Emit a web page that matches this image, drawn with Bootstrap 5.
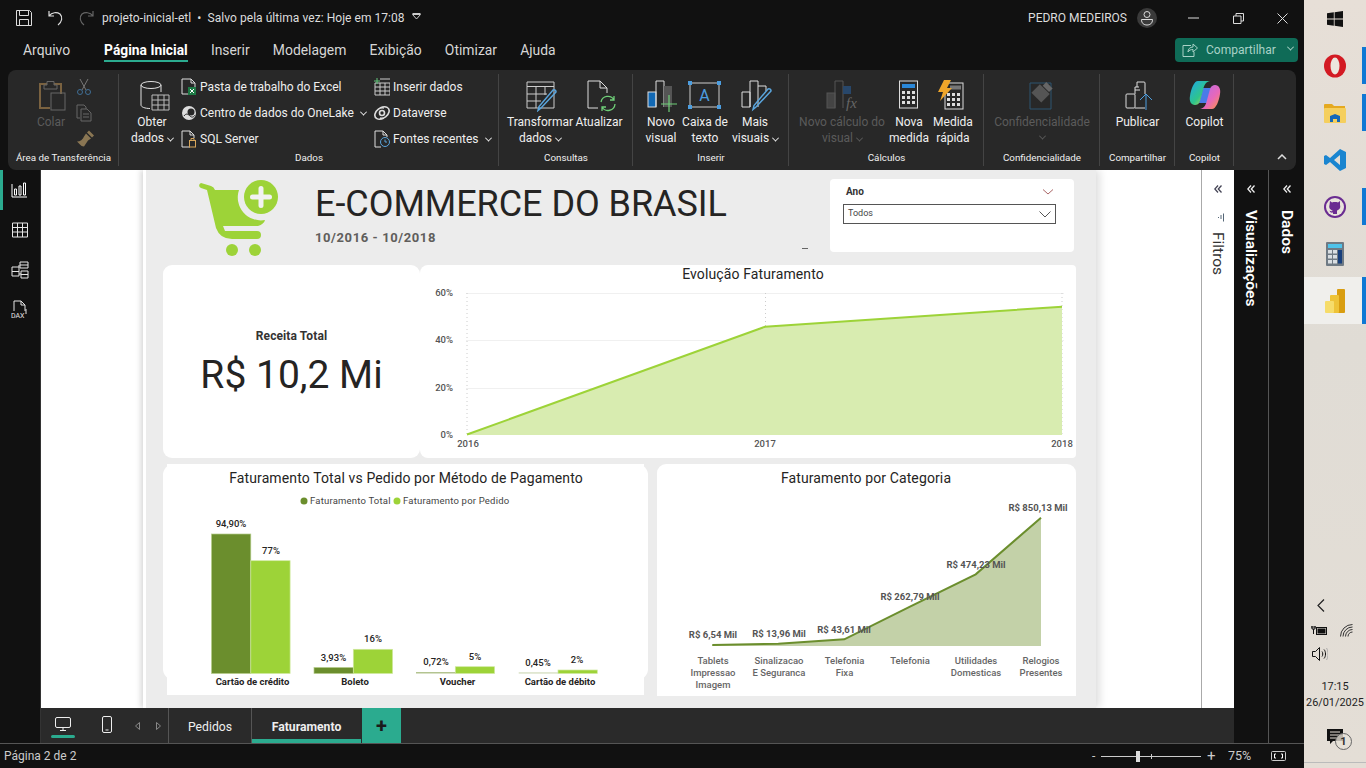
<!DOCTYPE html>
<html lang="pt-BR"><head><meta charset="utf-8"><title>Power BI</title>
<link href="https://cdn.jsdelivr.net/npm/bootstrap@5.3.0/dist/css/bootstrap.min.css" rel="stylesheet">
<style>
html,body{margin:0;width:1366px;height:768px;overflow:hidden;background:#111}
body{font-family:Roboto,"Liberation Sans",sans-serif;font-size:12px;color:#fff}
svg{display:block;flex:none}
.app{width:1304px;height:768px;background:#111}
.titlebar{height:36px;color:#ddd;padding-left:16px}
.tb-undo{margin-left:16px}.tb-redo{margin-left:14px}
.fname{margin-left:8px;letter-spacing:.05px}
.tb-caret{margin-left:7px;margin-bottom:4px}
.tb-av{margin-left:10px;margin-right:15px}
.winbtn{width:44px;display:flex;justify-content:center}
.menubar{height:34px;padding:0 0 6px 23px;font-size:13.9px;color:#d6d6d6;gap:23.2px;position:relative}
.m-arq{margin-right:10.8px}
.menu-on{color:#fff;font-weight:700;position:relative;font-size:13.8px}
.menu-on::after{content:"";position:absolute;left:0;right:0;bottom:-2px;height:2px;background:#2bab8f}
.share{position:absolute;left:1175px;top:2px;width:123px;height:24px;background:#0f6b57;border:0;border-radius:4px;color:#a9d2c7;font-size:12px;padding:0 0 0 7px;gap:8px}
.share:hover{background:#0f6b57;color:#a9d2c7}
.sh-chev{margin:0 0 3px -2px}
.ribbon{height:100px;margin:0 8px;background:#282828;border-radius:8px;position:relative}
.rg{height:100px;position:relative;display:flex;flex-direction:column;flex:none}
.rg::after{content:"";position:absolute;right:0;top:4px;bottom:4px;width:1px;background:#444}
.rg-body{display:flex;flex:1;min-height:0}
.rg-lab{font-size:9.8px;line-height:14px;text-align:center;color:#f0f0f0;padding-bottom:5px}
.bigb{display:flex;flex-direction:column;align-items:center;padding-top:10px;text-align:center;line-height:16px;color:#efefef;flex:none;white-space:nowrap}
.bigb .ico{height:34px;display:flex;align-items:flex-start;justify-content:center}
.ic-r2{margin-left:4px}.ic-r3{margin-left:6px}.ic-l3{margin-right:5px}
.dis{color:#5b5b5b}
.smallcol{display:flex;flex-direction:column;padding-top:4px;flex:none}
.srow{height:26px;display:flex;align-items:center;gap:3px;color:#efefef;white-space:nowrap;flex:none}
.srow svg{width:16px;height:18px}
.chev{display:inline-block;width:5px;height:5px;border:solid currentColor;border-width:0 1px 1px 0;transform:rotate(45deg) translate(-1px,-1px);margin-left:4px}
.w-g1{width:111px}.w-g2{width:380px}.w-g3{width:134px}.w-g4{width:156px}.w-g5{width:195px}.w-g6{width:116px}.w-g7{width:75px}.w-g8{width:59px}
.b-colar{margin-left:21px;width:44px}
.clipcol{display:flex;flex-direction:column;gap:8px;margin-left:3px;padding-top:8px;flex:none}
.clipcol svg{height:18px}
.b-obter{margin-left:13px;width:40px}
.sc-a{margin-left:9px;width:193px}
.b-transf{margin-left:8px;width:66px}.b-atual{margin-left:2px;width:48px}
.b-novo{margin-left:8px;width:40px}.b-caixa{margin-left:2px;width:44px}.b-mais{margin-left:6px;width:44px}
.b-calc{margin-left:7px;width:92px}.b-nova{margin-left:1px;width:40px}.b-rap{margin-left:2px;width:44px}
.conf-chev{margin:5px 0 0 0}
.collapse-ic{position:absolute;right:9px;bottom:10px}
.mainrow{height:573px}
.rail{width:41px;border-right:1px solid #333;background:#111}
.railbtn{height:40px;display:flex;align-items:center;justify-content:center;position:relative}
.railbtn svg{width:18px;height:20px}
.rail-on::before{content:"";position:absolute;left:0;top:0;bottom:0;width:3px;background:#2bab8f}
.centercol{width:1193px}
.canvasrow{height:538px}
.canvasbg{width:1160px;background:#fff;padding-left:102px}
.pagex{width:953px;background:#fff;padding-left:3px;box-shadow:-3px 0 5px rgba(0,0,0,.12),4px 0 8px rgba(0,0,0,.12)}
.pageg{width:950px;height:538px;background:#ececec;padding-left:17px}
.rhead{height:95px;position:relative}
.logo{margin-left:35px;margin-top:10px}
.ttl{margin-left:35px;padding-top:14px;color:#252423}
.ttl h1{font-size:36px;line-height:40px;font-weight:400;letter-spacing:-.05px;margin:0;font-family:Roboto,sans-serif}
.ttl p{font-size:13px;font-weight:700;color:#605e5c;margin:4px 0 0;line-height:20px;letter-spacing:.6px}
.slicer{position:absolute;left:667px;top:9px;width:244px;height:73px;background:#fff;border-radius:4px;border:0;padding:7px 18px 0 13px}
.sl-h{font-size:10px;font-weight:700;color:#333;display:flex;justify-content:space-between;align-items:center;padding:0 3px;line-height:12px;margin-bottom:6px}
.sl-box{height:20px;border:1px solid #555;font-size:9px;color:#444;padding:0 4px;display:flex;justify-content:space-between;align-items:center}
.sl-dash{position:absolute;left:639px;top:78px;width:6px;height:1px;background:#666}
.rowa{height:193px}
.kpi{width:257px;height:193px;background:#fff;border-radius:9px;border:0;color:#252423;align-items:center;justify-content:center;padding-bottom:0;padding-top:4px}
.kl{font-size:12px;font-weight:700;color:#333;line-height:16px;letter-spacing:.1px}
.kv{font-size:39px;line-height:50px;margin-top:6px;font-weight:400}
.area{width:656px;height:193px;background:#fff;border-radius:8px 4px 4px 8px;border:0}
.rowb{height:231px;margin-top:6px;gap:9px}
.barc{width:477px;height:231px;background:#fff;margin:0 4px;position:relative;border:0;border-radius:0}
.barc::before{content:"";position:absolute;left:-4px;right:-4px;top:0;height:216px;background:#fff;border-radius:11px}
.barc svg{position:relative;margin-left:-4px}
.catc{width:419px;height:232px;background:#fff;border-radius:9px 9px 0 0;border:0}
.viewtxt{font-family:Roboto,sans-serif}
.t14{font-size:14px;fill:#252423;letter-spacing:.12px}
.t-ax{font-size:9.5px;fill:#555;font-weight:500}
.t-leg{font-size:9.5px;fill:#444;letter-spacing:.2px}
.t-val{font-size:9.5px;fill:#252423;font-weight:500}
.t-cat{font-size:9.5px;fill:#252423;font-weight:700}
.t-rs{font-size:9.5px;fill:#555;font-weight:700}
.t-cl{font-size:9.5px;fill:#666;font-weight:500}
.fpane{width:33px;background:#fff;border-left:1px solid #aaa;color:#333}
.vpane{width:35px;border-right:1px solid #555;color:#fff}
.dpane{width:35px;color:#fff}
.pchev{margin:15px 0 17px}
.fchev{margin:15px 0 20px}
.ficon{margin:0 0 10px 6px}
.vtext{writing-mode:vertical-rl;font-size:15.5px;line-height:20px;white-space:nowrap}
.vpane .vtext,.dpane .vtext{font-weight:600}
.tabbar{height:35px;background:#2a2a2a}
.devbtn{width:44px;height:35px;display:flex;align-items:center;justify-content:center;position:relative;padding-bottom:3px}
.dev-on::after{content:"";position:absolute;left:10px;width:24px;height:3px;bottom:5px;background:#2bab8f;border-radius:2px}
.tabnav{width:39px;padding-left:6px;gap:16px}
.pgtab{height:35px;display:flex;align-items:center;justify-content:center;color:#eee;font-size:12.2px;border-left:1px solid #555;position:relative;width:83px;padding-top:3px}
.pgtab-on{font-weight:700;width:110px}
.pgtab-on::after{content:"";position:absolute;left:0;right:0;bottom:0;height:4px;background:#2bab8f}
.addtab{width:39px;height:35px;background:#2bab8f;color:#1b1b1b;font-size:20px;font-weight:700;display:flex;align-items:center;justify-content:center;line-height:1;margin-left:1px}
.statusb{height:25px;border-top:1px solid #555;color:#ccc;padding-left:4px;font-size:12px;position:relative;background:#111}
.zoomx{position:absolute;left:1092px;top:0;height:24px;display:flex;align-items:center}
.zminus{width:4px}
.zline{width:100px;height:1px;background:#ccc;position:relative;margin:0 6px 0 5px}
.zthumb{position:absolute;left:35px;top:-5px;width:4px;height:11px;background:#ddd}
.ztick{position:absolute;left:50px;top:-2px;width:1px;height:5px;background:#ccc}
.zplus{width:10px;font-size:15px;line-height:1}
.zpct{margin-left:11px;width:23px;font-size:12.5px}
.zfit{margin-left:20px}
.winbar{width:62px;height:768px;background:linear-gradient(180deg,#e7dfd7,#e0dcd5 45%,#e4ded6);color:#111;position:relative}
.wb-item{height:47px;display:flex;align-items:center;justify-content:center;position:relative;flex:none}
.wb-first{height:42px;align-items:flex-start;padding-top:11px}
.wb-ind::after{content:"";position:absolute;right:0;top:5px;bottom:5px;width:4px;background:#0f78d4}
.wb-on{background:#f0efec}
.wb-on::after{top:0;bottom:0}
.tray{margin-top:auto}
.traychev{padding-left:13px;margin-bottom:6px}
.trayrow{display:flex;align-items:center;height:24px}
.tr-a{padding-left:7px}.tr-wifi{margin-left:12px}.tr-b{padding-left:8px}
.clock{font-size:10.9px;line-height:16px;text-align:center;margin-top:13px;color:#222;white-space:nowrap}
.notif{height:47px;display:flex;align-items:center;justify-content:center;position:relative;margin-top:5px;padding-bottom:5px;border-bottom:1px solid #bbb;margin-bottom:5px}
.notif-b{position:absolute;left:31px;top:17px;width:17px;height:17px;border-radius:50%;border:1px solid #666;background:rgba(230,225,215,.8);font-size:11px;font-weight:700;line-height:15px;text-align:center;color:#333}
</style></head>
<body>
<div class="d-flex">
<div class="app d-flex flex-column">

<div class="titlebar d-flex align-items-center">
 <svg width="16" height="16" viewBox="0 0 16 16" fill="none" stroke="#ddd"><path d="M.5.5h13l2 2v13H.5zM3.500.5v5h9v-5M3.500 15.500v-6h9v6"/></svg>
 <svg class="tb-undo" width="16" height="16" viewBox="0 0 16 16" fill="none" stroke="#ddd" stroke-width="1.200"><path d="M1 1v5h5M1 6c3-4 8-4 11-2 3 3 2 8-2 11"/></svg>
 <svg class="tb-redo" width="16" height="16" viewBox="0 0 16 16" fill="none" stroke="#666" stroke-width="1.200"><path d="M15 1v5h-5M15 6c-3-4-8-4-11-2-3 3-2 8 2 11"/></svg>
 <span class="fname">projeto-inicial-etl &nbsp;•&nbsp; Salvo pela última vez: Hoje em 17:08</span>
 <svg class="tb-caret" width="10" height="7" viewBox="0 0 10 7" fill="none" stroke="#ccc"><path d="M.5 1.500h8L4.500 6zM.5.500h8"/></svg>
 <span class="ms-auto">PEDRO MEDEIROS</span>
 <svg class="tb-av" width="20" height="20" viewBox="0 0 20 20"><circle cx="10" cy="10" r="10" fill="#3a3a3a"/><g fill="none" stroke="#ddd"><circle cx="10" cy="6.500" r="3"/><path d="M4.500 11.500h11c0 4-2.500 5.500-5.500 5.500s-5.500-1.500-5.500-5.500z"/></g></svg>
 <div class="winbtn"><svg width="12" height="2" viewBox="0 0 12 2"><path d="M0 1h11" stroke="#ddd"/></svg></div>
 <div class="winbtn"><svg width="11" height="11" viewBox="0 0 11 11" fill="none" stroke="#ddd"><path d="M.5 3h7.500v7.500H.5zM3 3V.5h7.500V8H8"/></svg></div>
 <div class="winbtn"><svg width="11" height="11" viewBox="0 0 11 11" stroke="#ddd"><path d="M.5.5l10 10M10.500.5l-10 10"/></svg></div>
</div>

<div class="menubar d-flex align-items-center">
 <span class="m-arq">Arquivo</span><span class="menu-on">Página Inicial</span><span>Inserir</span><span>Modelagem</span><span>Exibição</span><span>Otimizar</span><span>Ajuda</span>
 <button class="btn share d-flex align-items-center" type="button">
  <svg width="16" height="14" viewBox="0 0 16 14" fill="none" stroke="#a9d2c7"><path d="M9 2.500H1v11h11V9M6 9c0-3 2-5 5-5V1l4.500 4L11 9V6.500C9 6.500 7 7 6 9z"/></svg>
  <span>Compartilhar</span><span class="chev sh-chev"></span></button>
</div>

<div class="ribbon d-flex">
 <div class="rg w-g1"><div class="rg-body">
   <div class="bigb dis b-colar"><div class="ico ic-r2">
    <svg width="30" height="32" viewBox="0 0 30 32" fill="none"><path d="M9 4H2v24h10" stroke="#7a6240" stroke-width="2"/><path d="M16 4h7v10" stroke="#7a6240" stroke-width="2"/><path d="M9 5V1.500h7V5h3v4H6V5z" stroke="#666"/><rect x="13" y="13" width="14" height="17" stroke="#666"/></svg></div>Colar</div>
   <div class="clipcol">
    <svg width="16" height="18" viewBox="0 0 16 18" fill="none" stroke="#777"><path d="M4 1l6 11M12 1L6 12"/><circle cx="4" cy="14" r="2.500" stroke="#3f6e95"/><circle cx="12" cy="14" r="2.500" stroke="#3f6e95"/></svg>
    <svg width="16" height="18" viewBox="0 0 16 18" fill="none" stroke="#666"><path d="M4 14H1V1h7l2 2v2M5 5h6l4 4v8H5zM7 10h6M7 13h6"/></svg>
    <svg width="18" height="18" viewBox="0 0 18 17" fill="#8a7653"><path d="M10 3l5 5-3 2-4 6c-2 0-3-1-4-2L1 11c3 0 6-2 7-5zM11 2l2-2 5 5-2 2z"/></svg>
   </div></div><div class="rg-lab">Área de Transferência</div></div>

 <div class="rg w-g2"><div class="rg-body">
   <div class="bigb b-obter"><div class="ico ic-r3">
    <svg width="30" height="32" viewBox="0 0 30 32" fill="none" stroke="#e0e0e0"><ellipse cx="11" cy="5" rx="10" ry="3.500"/><path d="M1 5v20c0 2 4 3.500 9 3.500M21 5v7"/><path d="M12 15h17v15H12zM12 20h17M12 25h17M18 15v15M24 15v15" stroke="#bbb"/></svg></div>Obter<span class="text-nowrap">dados<span class="chev"></span></span></div>
   <div class="smallcol sc-a">
    <div class="srow"><svg viewBox="0 0 16 18" fill="none" stroke="#ddd"><path d="M10 16H1V1h9l4 4v4M10 1v4h4"/><rect x="7" y="9" width="8" height="8" fill="#1d7a45" stroke="none"/><path d="M9 11l4 4M13 11l-4 4" stroke="#fff"/></svg>Pasta de trabalho do Excel</div>
    <div class="srow"><svg viewBox="0 0 16 18"><circle cx="8" cy="9" r="7" fill="#ddd"/><circle cx="10" cy="8" r="3.500" fill="#282828"/><path d="M3 12c2-3 4-2 6 0s4 1 5-1" fill="none" stroke="#282828"/></svg>Centro de dados do OneLake<span class="chev"></span></div>
    <div class="srow"><svg viewBox="0 0 16 18" fill="none" stroke="#ddd"><path d="M9 17H1V1h8l4 4v3M9 1v4h4"/><rect x="8.500" y="10.500" width="6" height="6.500" stroke="#d9a75b"/><path d="M10 10.500V8.500h3v2" stroke="#d9a75b"/></svg>SQL Server</div>
   </div>
   <div class="smallcol">
    <div class="srow"><svg viewBox="0 0 16 18" fill="none" stroke="#ccc"><path d="M1 5h15v12H1zM1 9h15M1 13h15M6 5v12M11 5v12M6 1h10"/><path d="M3 0v6M0 3h6" stroke="#63c57a"/></svg>Inserir dados</div>
    <div class="srow"><svg viewBox="0 0 16 18" fill="none" stroke="#ddd" stroke-width="1.600"><path d="M6 4c6-3 10 0 9 4s-5 7-9 6M10 14c-6 3-10 0-9-4s5-7 9-6"/><circle cx="8" cy="9" r="2.500"/></svg>Dataverse</div>
    <div class="srow"><svg viewBox="0 0 16 18" fill="none" stroke="#ddd"><path d="M7 17H1V1h8l4 4v2M9 1v4h4"/><circle cx="11" cy="12" r="4.500" stroke="#5aa5dd"/><path d="M11 9.500V12h2" stroke="#5aa5dd"/></svg>Fontes recentes<span class="chev"></span></div>
   </div>
  </div><div class="rg-lab">Dados</div></div>

 <div class="rg w-g3"><div class="rg-body">
   <div class="bigb b-transf"><div class="ico ic-r2">
    <svg width="32" height="32" viewBox="0 0 32 32" fill="none" stroke="#ccc"><path d="M1 2h27v26H1zM1 6.500h27M1 14h20M1 21h14M10 6.500V28M19 6.500V15"/><path d="M30 12l-15 16-3 2.500 1-4L27 10a2 2 0 013 2z" stroke="#5aa5dd" stroke-width="1.500"/></svg></div>Transformar<span class="text-nowrap">dados<span class="chev"></span></span></div>
   <div class="bigb b-atual"><div class="ico ic-r2">
    <svg width="30" height="32" viewBox="0 0 30 32" fill="none"><path d="M12 28H2V1h12l7 7v5M14 1v7h7" stroke="#ddd"/><path d="M15 22a7 7 0 0113-2M29 24a7 7 0 01-13 3M28 16v4h-4M16 31v-4h4" stroke="#6fcf78" stroke-width="1.300"/></svg></div>Atualizar</div>
  </div><div class="rg-lab">Consultas</div></div>

 <div class="rg w-g4"><div class="rg-body">
   <div class="bigb b-novo"><div class="ico ic-r2">
    <svg width="32" height="32" viewBox="0 0 32 32" fill="none"><rect x="1" y="12" width="8" height="15" fill="#1269b5" stroke="#ddd"/><path d="M9 27V1h8v26" stroke="#ddd"/><rect x="17" y="6" width="8" height="21" fill="#555"/><path d="M22 15v17M14 24h16" stroke="#6fcf78" stroke-width="1.200"/></svg></div>Novo<br>visual</div>
   <div class="bigb b-caixa"><div class="ico">
    <svg width="34" height="30" viewBox="0 0 34 30" fill="none"><rect x="2" y="3" width="29" height="24" stroke="#ccc"/><g fill="#4c9ee0"><rect x="0" y="1" width="4" height="4"/><rect x="29" y="1" width="4" height="4"/><rect x="0" y="25" width="4" height="4"/><rect x="29" y="25" width="4" height="4"/></g><text x="16.500" y="21" text-anchor="middle" font-size="16" fill="#4c9ee0" font-family="Roboto">A</text></svg></div>Caixa de<br>texto</div>
   <div class="bigb b-mais"><div class="ico ic-r2">
    <svg width="32" height="32" viewBox="0 0 32 32" fill="none"><path d="M1 12h8v15H1zM9 27V1h8v26M17 6h8v5" stroke="#ddd"/><path d="M30 11L15 27l-3 2.500 1-4L27 9a2 2 0 013 2z" stroke="#5aa5dd" stroke-width="1.500"/></svg></div>Mais<span class="text-nowrap">visuais<span class="chev"></span></span></div>
  </div><div class="rg-lab">Inserir</div></div>

 <div class="rg w-g5"><div class="rg-body">
   <div class="bigb dis b-calc"><div class="ico">
    <svg width="32" height="32" viewBox="0 0 32 32" fill="none"><rect x="1" y="13" width="8" height="15" fill="#444" stroke="#555"/><path d="M9 28V1h8v27" stroke="#555"/><rect x="17" y="6" width="8" height="8" fill="#28476a"/><text x="20" y="28" font-size="15" font-family="Liberation Serif" font-style="italic" fill="#666">fx</text></svg></div>Novo cálculo do<span class="text-nowrap">visual<span class="chev"></span></span></div>
   <div class="bigb b-nova"><div class="ico">
    <svg width="20" height="30" viewBox="0 0 20 30" fill="none"><rect x=".5" y="1" width="18" height="27" stroke="#ddd"/><rect x="3" y="4" width="13" height="4" fill="#2b88d8"/><g fill="#ddd"><rect x="3" y="11" width="3" height="3"/><rect x="8" y="11" width="3" height="3"/><rect x="13" y="11" width="3" height="3"/><rect x="3" y="16" width="3" height="3"/><rect x="8" y="16" width="3" height="3"/><rect x="13" y="16" width="3" height="3"/><rect x="3" y="21" width="3" height="3"/><rect x="8" y="21" width="3" height="3"/><rect x="13" y="21" width="3" height="3"/></g></svg></div>Nova<br>medida</div>
   <div class="bigb b-rap"><div class="ico ic-l3">
    <svg width="28" height="32" viewBox="0 0 28 32" fill="none"><rect x="8" y="3" width="18" height="26" stroke="#ddd"/><rect x="13" y="5.500" width="11" height="4" fill="#777"/><g fill="#ddd"><rect x="10" y="13" width="3" height="3"/><rect x="15" y="13" width="3" height="3"/><rect x="20" y="13" width="3" height="3"/><rect x="10" y="18" width="3" height="3"/><rect x="15" y="18" width="3" height="3"/><rect x="20" y="18" width="3" height="3"/><rect x="10" y="23" width="3" height="3"/><rect x="15" y="23" width="3" height="3"/><rect x="20" y="23" width="3" height="3"/></g><path d="M7 0h7l-4 8h5L3 21l3-9H1z" fill="#f0a62a"/></svg></div>Medida<br>rápida</div>
  </div><div class="rg-lab">Cálculos</div></div>

 <div class="rg w-g6"><div class="rg-body">
   <div class="bigb dis w-100"><div class="ico">
    <svg width="28" height="32" viewBox="0 0 28 32" fill="none"><path d="M2 3h21v26H2z" stroke="#2d5470"/><g transform="rotate(45 14 12)"><rect x="7" y="8" width="14" height="12" fill="#555"/><rect x="10" y="2" width="9" height="5" fill="#666"/></g></svg></div>Confidencialidade<span class="chev conf-chev"></span></div>
  </div><div class="rg-lab">Confidencialidade</div></div>

 <div class="rg w-g7"><div class="rg-body">
   <div class="bigb w-100"><div class="ico">
    <svg width="28" height="30" viewBox="0 0 28 30" fill="none" stroke="#ddd"><rect x="2" y="14" width="9" height="14" rx="1"/><path d="M11 10h5M11 14V7h4M13 7V2h7a1 1 0 011 1v11M21 28h-10"/><path d="M22 30V15M16 20l6-6 6 6" stroke="#4c9ee0"/></svg></div>Publicar</div>
  </div><div class="rg-lab">Compartilhar</div></div>

 <div class="rg w-g8"><div class="rg-body">
   <div class="bigb w-100"><div class="ico">
    <svg width="32" height="30" viewBox="0 0 32 30"><defs><linearGradient id="cpa" x1="0" y1="0" x2="1" y2="1"><stop offset="0" stop-color="#1ea7e8"/><stop offset=".55" stop-color="#2fc58a"/><stop offset="1" stop-color="#f4d93a"/></linearGradient><linearGradient id="cpb" x1="0" y1="0" x2="1" y2="1"><stop offset="0" stop-color="#b06bf0"/><stop offset=".6" stop-color="#e868b8"/><stop offset="1" stop-color="#ff9a3c"/></linearGradient></defs><path d="M14 8h8l-4 15h-8z" fill="#4a7be8"/><path d="M9 1h12C16 2 15 6 14 10l-3 11c-1 3-3 4-5 4-4 0-6-4-5-9C2 9 5 1 9 1z" fill="url(#cpa)"/><path d="M23 29H11c5-1 6-5 7-9l3-11c1-3 3-4 5-4 4 0 6 4 5 9-1 7-4 15-8 15z" fill="url(#cpb)"/></svg></div>Copilot</div>
  </div><div class="rg-lab">Copilot</div></div>
 <svg class="collapse-ic" width="10" height="6" viewBox="0 0 10 6" fill="none" stroke="#ddd" stroke-width="1.500"><path d="M1 5l4-4 4 4"/></svg>
</div>

<div class="mainrow d-flex">
 <div class="rail">
  <div class="railbtn rail-on"><svg viewBox="0 0 18 20" fill="none" stroke="#fff"><path d="M1 4v13h15M3.500 9v6h2V9zM8 6v9h2V6zM12.500 3v12h2V3z"/></svg></div>
  <div class="railbtn"><svg viewBox="0 0 18 20" fill="none" stroke="#e6e6e6"><path d="M1.500 3h15v14h-15zM1.500 7.500h15M1.500 12h15M6.500 3v14M11.500 3v14"/></svg></div>
  <div class="railbtn"><svg viewBox="0 0 18 20" fill="none" stroke="#e6e6e6"><path d="M1 7h7v9H1zM1 11.500h7M9 2h8v6H9zM9 5h8M10 11h7v7h-7zM10 14.500h7M8 5v2M8 14h2"/></svg></div>
  <div class="railbtn"><svg viewBox="0 0 18 20" fill="none" stroke="#e6e6e6"><path d="M3 11V1h7l4 4v6M10 1v4h4M15 9v5"/><text x="0" y="18" font-size="7" fill="#e6e6e6" stroke="none" font-family="Roboto">DAX</text></svg></div>
 </div>
 <div class="centercol d-flex flex-column">
  <div class="canvasrow d-flex">
   <div class="canvasbg">
    <div class="pagex"><div class="pageg">
     <div class="rhead d-flex">
      <svg class="logo" width="82" height="78" viewBox="0 0 82 78"><g fill="#9dd338"><path d="M3 3l10 3q3 1 4 4h24a23 23 0 0 0 26 30q-1 4-7 6H25l2 5h32a4 4 0 0 1 0 8H34q-12 0-16-11L9 10 3 8a2.600 2.600 0 0 1 0-5z"/><circle cx="34" cy="70" r="6"/><circle cx="57" cy="70" r="6"/><circle cx="63" cy="17" r="17"/></g><path d="M63 8.500v17M54.500 17h17" stroke="#f2f2f2" stroke-width="5" stroke-linecap="round"/></svg>
      <div class="ttl"><h1>E-COMMERCE DO BRASIL</h1><p>10/2016 - 10/2018</p></div>
      <div class="sl-dash"></div>
      <div class="slicer card"><div class="sl-h"><span>Ano</span><svg width="10" height="6" viewBox="0 0 10 6" fill="none" stroke="#a66"><path d="M0 .5l5 4.500 5-4.500"/></svg></div>
       <div class="sl-box"><span>Todos</span><svg width="12" height="7" viewBox="0 0 12 7" fill="none" stroke="#555"><path d="M.5.5L6 6l5.500-5.500"/></svg></div></div>
     </div>
     <div class="rowa d-flex">
      <div class="kpi card"><div class="kl">Receita Total</div><div class="kv">R$ 10,2 Mi</div></div>
      <div class="area card">
       <svg width="656" height="193" viewBox="420 265 656 193" class="viewtxt">
        <text x="753" y="279" text-anchor="middle" class="t14">Evolução Faturamento</text>
        <g stroke="#f0f0f0"><path d="M466 293.500h598M466 340.500h598M466 388.500h598"/></g>
        <g stroke="#ccc" stroke-dasharray="1 3"><path d="M467 293v142M765.500 293v142M1062 293v142"/></g>
        <path d="M467 434.500L765 326.700 1062 306.700V435H467z" fill="#d8ecb0"/>
        <path d="M467 434.500L765 326.700 1062 306.700" fill="none" stroke="#9dd338" stroke-width="2"/>
        <g class="t-ax" text-anchor="end"><text x="453" y="296">60%</text><text x="453" y="343">40%</text><text x="453" y="391">20%</text><text x="453" y="438">0%</text></g>
        <g class="t-ax" text-anchor="middle"><text x="468" y="447">2016</text><text x="765" y="447">2017</text><text x="1062" y="447">2018</text></g>
       </svg></div>
     </div>
     <div class="rowb d-flex">
      <div class="barc card">
       <svg width="485" height="231" viewBox="163 464 485 231" class="viewtxt">
        <text x="406" y="482.500" text-anchor="middle" class="t14">Faturamento Total vs Pedido por Método de Pagamento</text>
        <circle cx="304" cy="501" r="3.500" fill="#6b8e2d"/><text x="310" y="504" class="t-leg">Faturamento Total</text>
        <circle cx="397" cy="501" r="3.500" fill="#9dd338"/><text x="403" y="504" class="t-leg">Faturamento por Pedido</text>
        <g fill="#6b8e2d" stroke="#b5cc8a" stroke-width=".7"><rect x="211.500" y="534" width="39.300" height="139.500"/><rect x="314" y="667.500" width="39.300" height="6"/></g>
        <g fill="#9dd338" stroke="#d0e9a0" stroke-width=".7"><rect x="250.800" y="560.700" width="39.300" height="112.800"/><rect x="353.300" y="649.300" width="39.300" height="24.200"/><rect x="455.300" y="666.700" width="39.300" height="6.800"/><rect x="558" y="670" width="39.300" height="3.500"/></g>
        <rect x="416" y="672" width="39.300" height="1.500" fill="#b3c490"/><rect x="518.700" y="672.400" width="39.300" height="1.100" fill="#ccd8b3"/>
        <g class="t-val" text-anchor="middle"><text x="231" y="527">94,90%</text><text x="271" y="554">77%</text><text x="333.500" y="661">3,93%</text><text x="373" y="642">16%</text><text x="436" y="665">0,72%</text><text x="475" y="660">5%</text><text x="538" y="666">0,45%</text><text x="577" y="663">2%</text></g>
        <g class="t-cat" text-anchor="middle"><text x="252.500" y="685">Cartão de crédito</text><text x="355" y="685">Boleto</text><text x="457.500" y="685">Voucher</text><text x="560" y="685">Cartão de débito</text></g>
       </svg></div>
      <div class="catc card">
       <svg width="419" height="232" viewBox="657 464 419 232" class="viewtxt">
        <text x="866" y="482.500" text-anchor="middle" class="t14">Faturamento por Categoria</text>
        <path d="M712.300 645L778.300 643.700 844.300 639.300 910 606.700 975.700 574.300 1041 517.700V646H712.300z" fill="#c3d1a8"/>
        <path d="M712.300 645L778.300 643.700 844.300 639.300 910 606.700 975.700 574.300 1041 517.700" fill="none" stroke="#6b8e2d" stroke-width="2"/>
        <g class="t-rs" text-anchor="middle"><text x="713" y="638">R$ 6,54 Mil</text><text x="779" y="637">R$ 13,96 Mil</text><text x="844" y="633">R$ 43,61 Mil</text><text x="910" y="600">R$ 262,79 Mil</text><text x="976" y="568">R$ 474,23 Mil</text><text x="1038" y="511">R$ 850,13 Mil</text></g>
        <g class="t-cl" text-anchor="middle"><text x="713" y="664">Tablets</text><text x="713" y="676">Impressao</text><text x="713" y="688">Imagem</text><text x="779" y="664">Sinalizacao</text><text x="779" y="676">E Seguranca</text><text x="844.500" y="664">Telefonia</text><text x="844.500" y="676">Fixa</text><text x="910" y="664">Telefonia</text><text x="976" y="664">Utilidades</text><text x="976" y="676">Domesticas</text><text x="1041" y="664">Relogios</text><text x="1041" y="676">Presentes</text></g>
       </svg></div>
     </div>
    </div></div>
   </div>
   <div class="fpane d-flex flex-column align-items-center">
    <svg class="fchev" width="8" height="8" viewBox="0 0 8 8" fill="none" stroke="#445" stroke-width="1.300"><path d="M4 .5L.8 4 4 7.500M7.500.5L4.300 4l3.200 3.500"/></svg>
    <svg class="ficon" width="7" height="9" viewBox="0 0 7 9" stroke="#567"><path d="M.5 4v1M3 2v4M5.500.5v8"/></svg>
    <div class="vtext">Filtros</div>
   </div>
  </div>
  <div class="tabbar d-flex">
   <div class="devbtn dev-on"><svg width="16" height="15" viewBox="0 0 16 15" fill="none" stroke="#eee"><rect x=".5" y=".5" width="15" height="10" rx="1.500"/><path d="M5 13.500h6M8 11v2"/></svg></div>
   <div class="devbtn"><svg width="10" height="17" viewBox="0 0 10 17" fill="none" stroke="#eee"><rect x=".5" y=".5" width="9" height="16" rx="1.500"/><path d="M3.500 14h3"/></svg></div>
   <div class="d-flex align-items-center tabnav"><svg width="5" height="8" viewBox="0 0 5 8" fill="none" stroke="#888"><path d="M4.500.5L.5 4l4 3.500z"/></svg><svg width="5" height="8" viewBox="0 0 5 8" fill="none" stroke="#888"><path d="M.5.500L4.500 4l-4 3.500z"/></svg></div>
   <div class="pgtab">Pedidos</div>
   <div class="pgtab pgtab-on">Faturamento</div>
   <div class="addtab">+</div>
  </div>
 </div>
 <div class="vpane d-flex flex-column align-items-center">
  <svg class="pchev" width="8" height="8" viewBox="0 0 8 8" fill="none" stroke="#eee" stroke-width="1.300"><path d="M4 .5L.8 4 4 7.500M7.500.5L4.300 4l3.200 3.500"/></svg>
  <div class="vtext">Visualizações</div></div>
 <div class="dpane d-flex flex-column align-items-center">
  <svg class="pchev" width="8" height="8" viewBox="0 0 8 8" fill="none" stroke="#eee" stroke-width="1.300"><path d="M4 .5L.8 4 4 7.500M7.500.5L4.300 4l3.200 3.500"/></svg>
  <div class="vtext">Dados</div></div>
</div>

<div class="statusb d-flex align-items-center"><span>Página 2 de 2</span>
 <div class="zoomx"><span class="zminus">-</span><div class="zline"><div class="zthumb"></div><div class="ztick"></div></div><span class="zplus">+</span><span class="zpct">75%</span>
 <svg class="zfit" width="15" height="10" viewBox="0 0 15 10" fill="none" stroke="#ccc"><rect x=".5" y=".5" width="14" height="9" rx="1"/><path d="M5 3H3.500v4H5M10 3h1.500v4H10" stroke="#fff"/></svg></div>
</div>
</div>

<div class="winbar d-flex flex-column">
 <div class="wb-item wb-first"><svg width="16" height="16" viewBox="0 0 16 16" fill="#111"><path d="M0 2.300l6.800-1v6.200H0zM7.600 1.200L16 0v7.500H7.600zM0 8.500h6.800v6.200L0 13.700zM7.600 8.500H16V16l-8.400-1.200z"/></svg></div>
 <div class="wb-item wb-ind"><svg width="24" height="24" viewBox="0 0 24 24"><ellipse cx="12" cy="12" rx="11" ry="11.500" fill="#d31a23"/><ellipse cx="12" cy="12" rx="4.500" ry="8.500" fill="#ece5dd"/></svg></div>
 <div class="wb-item wb-ind"><svg width="22" height="20" viewBox="0 0 22 20"><path d="M0 2a1 1 0 011-1h7l2 2h11v4H0z" fill="#e5a920"/><rect y="5" width="22" height="15" rx="1" fill="#f5cf5e"/><path d="M6 19v-6l5-2 5 2v6h-3v-3H9v3z" fill="#1668b8"/></svg></div>
 <div class="wb-item"><svg width="24" height="24" viewBox="0 0 24 24"><path d="M17 1l6 3v16l-6 3L7 14l-4 3-2-1V8l2-1 4 3zM17 7l-6 5 6 5z" fill="#1a85d0"/></svg></div>
 <div class="wb-item wb-ind"><svg width="24" height="24" viewBox="0 0 24 24"><circle cx="12" cy="12" r="11" fill="#6a2c91"/><circle cx="12" cy="12" r="9" fill="#e9e4dc"/><path d="M7 6l2 1.500c2-.6 4-.6 6 0L17 6v4c1 3-1 5-3 5.500V19h-4v-1.500c-1.500.4-3 0-3.500-2 1 .8 2 1 3 .5v-.5c-2-.5-4-2.500-3-5.500z" fill="#6a2c91"/></svg></div>
 <div class="wb-item"><svg width="18" height="24" viewBox="0 0 18 24"><rect width="18" height="24" rx="1" fill="#6f7a84"/><rect x="2" y="2" width="14" height="4" fill="#4fc3ea"/><g fill="#d9dee2"><rect x="2" y="8" width="4" height="3.500"/><rect x="7" y="8" width="4" height="3.500"/><rect x="2" y="13" width="4" height="3.500"/><rect x="7" y="13" width="4" height="3.500"/><rect x="2" y="18" width="4" height="3.500"/><rect x="7" y="18" width="4" height="3.500"/></g><rect x="12" y="8" width="4" height="13.500" fill="#173f7c"/></svg></div>
 <div class="wb-item wb-on wb-ind"><svg width="20" height="24" viewBox="0 0 20 24"><rect x="12" y="0" width="8" height="24" rx="1" fill="#d99d10"/><rect x="5" y="6" width="9" height="18" rx="1" fill="#eec338"/><rect x="0" y="12" width="9" height="12" rx="1" fill="#f6dc6a"/></svg></div>
 <div class="tray">
  <div class="traychev"><svg width="8" height="13" viewBox="0 0 8 13" fill="none" stroke="#222" stroke-width="1.200"><path d="M7 .5L1 6.500l6 6"/></svg></div>
  <div class="trayrow tr-a"><svg width="17" height="11" viewBox="0 0 17 11" fill="none" stroke="#111"><rect x="5.500" y="2.500" width="10" height="7"/><rect x="7" y="4" width="7" height="4" fill="#111"/><path d="M0 2h5M1 1v3h3V1M2.500 4v5"/></svg><svg class="tr-wifi" width="13" height="13" viewBox="0 0 13 13" fill="none" stroke="#333"><path d="M.5 12.500a12 12 0 0112-12M3 12.500a9.500 9.500 0 019.500-9.500M5.500 12.500a7 7 0 017-7M8 12.500A4.500 4.500 0 0112.500 8"/></svg></div>
  <div class="trayrow tr-b"><svg width="16" height="14" viewBox="0 0 16 14" fill="none" stroke="#111"><path d="M.5 4.500h3l4-4v13l-4-4h-3zM10 4.500c1 1 1 4 0 5M12 2.500c2 2 2 7 0 9"/><path d="M14.500 1c2 3 2 9 0 12" stroke="#aaa"/></svg></div>
  <div class="clock">17:15<br>26/01/2025</div>
  <div class="notif"><svg width="16" height="16" viewBox="0 0 16 16" fill="#111"><path d="M0 0h16v12H6l-3 3v-3H0z"/><path d="M3 3h10M3 6h10M3 9h7" stroke="#e6dfd7"/></svg><div class="notif-b">1</div></div>
 </div>
</div>
</div>
</body></html>
